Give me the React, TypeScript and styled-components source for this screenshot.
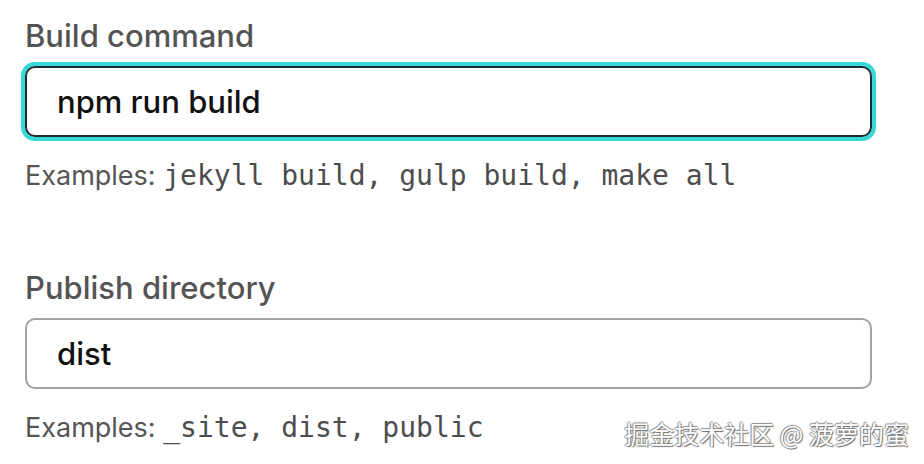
import styled, { createGlobalStyle } from "styled-components";

const GlobalStyle = createGlobalStyle`
  html, body {
    margin: 0;
    padding: 0;
    background: #ffffff;
  }
  body {
    font-family: Inter, "Liberation Sans", Arial, sans-serif;
  }
`;

const Page = styled.div`
  position: relative;
  width: 924px;
  height: 464px;
  overflow: hidden;
  padding: 16px 52px 0 25px;
  box-sizing: border-box;
  display: flex;
  flex-direction: column;
  gap: 74px;
`;

const Field = styled.div`
  display: flex;
  flex-direction: column;
`;

const Label = styled.label`
  font-size: 31px;
  line-height: 40px;
  font-weight: 500;
  color: #545454;
  margin-bottom: 10px;
`;

const InputBox = styled.div<{ $focused?: boolean }>`
  height: 71px;
  box-sizing: border-box;
  border-radius: 10px;
  border: 2px solid ${(p) => (p.$focused ? "#1e2b31" : "#a3a3a3")};
  box-shadow: ${(p) => (p.$focused ? "0 0 0 4px #38d8d8" : "none")};
  display: flex;
  align-items: center;
  padding: 0 30px;
  font-size: 31px;
  font-weight: 500;
  color: #111111;
`;

const Hint = styled.p`
  margin: 21px 0 0;
  font-size: 27px;
  line-height: 36px;
  color: #555555;
`;

const Code = styled.code`
  font-family: "DejaVu Sans Mono", "Liberation Mono", monospace;
  font-size: 28px;
  color: #4d4d4d;
`;

const Watermark = styled.div`
  position: absolute;
  right: 15px;
  bottom: 16px;
  font-family: "Noto Sans CJK SC", sans-serif;
  font-size: 25px;
  line-height: 30px;
  color: #ffffff;
  text-shadow: 1px 1px 1px #6a6a6a, -1px 0 1px #8a8a8a, 0 -1px 1px #8a8a8a;
  white-space: nowrap;
`;

export default function App() {
  return (
    <>
      <GlobalStyle />
      <Page>
        <Field>
          <Label>Build command</Label>
          <InputBox $focused>npm run build</InputBox>
          <Hint>
            Examples: <Code>jekyll build, gulp build, make all</Code>
          </Hint>
        </Field>
        <Field>
          <Label>Publish directory</Label>
          <InputBox>dist</InputBox>
          <Hint>
            Examples: <Code>_site, dist, public</Code>
          </Hint>
        </Field>
        <Watermark>掘金技术社区 @ 菠萝的蜜</Watermark>
      </Page>
    </>
  );
}
